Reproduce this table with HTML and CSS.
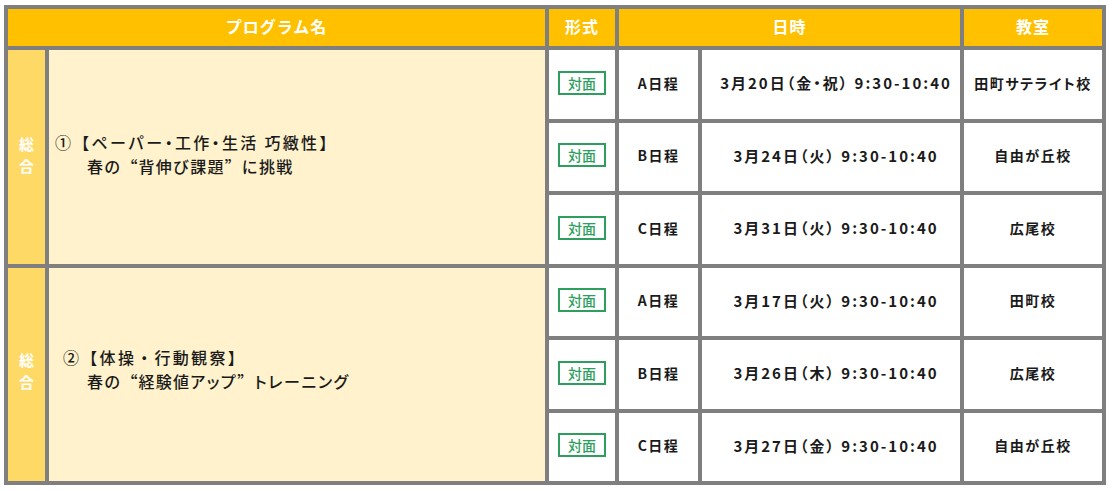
FILE: index.html
```html
<!DOCTYPE html>
<html lang="ja">
<head>
<meta charset="utf-8">
<link rel="stylesheet" href="styles.css">
</head>
<body>
<div class="table">
  <div class="th th-prog">プログラム名</div>
  <div class="th">形式</div>
  <div class="th th-date">日時</div>
  <div class="th">教室</div>

  <div class="cat cat-1">総<br>合</div>
  <div class="prog prog-1">
    <div class="title">①【ペーパー<span class="dot">・</span>工作<span class="dot">・</span>生活 巧緻性】</div>
    <div class="sub">春の<span class="q">“</span>背伸び課題<span class="q">”</span>に挑戦</div>
  </div>
  <div class="td"><span class="badge">対面</span></div>
  <div class="td">A日程</div>
  <div class="td date">3月20日（金・祝） 9:30-10:40</div>
  <div class="td">田町サテライト校</div>

  <div class="td"><span class="badge">対面</span></div>
  <div class="td">B日程</div>
  <div class="td date">3月24日（火） 9:30-10:40</div>
  <div class="td">自由が丘校</div>

  <div class="td"><span class="badge">対面</span></div>
  <div class="td">C日程</div>
  <div class="td date">3月31日（火） 9:30-10:40</div>
  <div class="td">広尾校</div>

  <div class="cat cat-2">総<br>合</div>
  <div class="prog prog-2">
    <div class="title">②【体操・行動観察】</div>
    <div class="sub">春の<span class="q">“</span>経験値<span class="kana">アップ</span><span class="q">”</span><span class="kana">トレーニング</span></div>
  </div>
  <div class="td"><span class="badge">対面</span></div>
  <div class="td">A日程</div>
  <div class="td date">3月17日（火） 9:30-10:40</div>
  <div class="td">田町校</div>

  <div class="td"><span class="badge">対面</span></div>
  <div class="td">B日程</div>
  <div class="td date">3月26日（木） 9:30-10:40</div>
  <div class="td">広尾校</div>

  <div class="td"><span class="badge">対面</span></div>
  <div class="td">C日程</div>
  <div class="td date">3月27日（金） 9:30-10:40</div>
  <div class="td">自由が丘校</div>
</div>
</body>
</html>
```

FILE: styles.css
```css
html, body {
  margin: 0;
  padding: 0;
  background: #ffffff;
}
body {
  padding: 5px 0 0 4px;
  font-family: "Noto Sans CJK JP", sans-serif;
}
.table {
  display: grid;
  width: 1094px;
  grid-template-columns: 37px 496px 66px 79px 258px 138px;
  grid-template-rows: 37px repeat(6, 68.5px);
  gap: 4px;
  padding: 4px;
  background: #7f7f7f;
}
.th {
  background: #ffc000;
  color: #ffffff;
  font-weight: 700;
  font-size: 16px;
  letter-spacing: 1px;
  padding-bottom: 3px;
  display: flex;
  align-items: center;
  justify-content: center;
}
.th-prog { grid-column: 1 / 3; }
.th-date { grid-column: 4 / 6; }
.cat {
  background: #ffd966;
  color: #ffffff;
  font-weight: 700;
  font-size: 15px;
  line-height: 22px;
  display: flex;
  align-items: center;
  justify-content: center;
  text-align: center;
}
.cat-1 { grid-row: 2 / 5; grid-column: 1; padding-bottom: 4px; }
.cat-2 { grid-row: 5 / 8; grid-column: 1; padding-bottom: 6px; }
.prog {
  background: #fff2cc;
  color: #1a1a1a;
  font-size: 16px;
  font-weight: 500;
  letter-spacing: 1.2px;
  line-height: 24px;
  padding-left: 6px;
  display: flex;
  flex-direction: column;
  justify-content: center;
}
.prog .title { letter-spacing: 2.3px; }
.prog-1 { grid-row: 2 / 5; grid-column: 2; padding-bottom: 5px; }
.prog-2 { grid-row: 5 / 8; grid-column: 2; padding-bottom: 10px; }
.prog-2 .title { padding-left: 8px; }
.prog .sub { padding-left: 32px; }
.dot { font-feature-settings: "palt"; }
.q { font-feature-settings: "fwid"; }
.kana { font-feature-settings: "palt"; letter-spacing: 1.6px; }
.td {
  background: #ffffff;
  color: #1a1a1a;
  font-weight: 700;
  font-size: 14px;
  letter-spacing: 1.5px;
  font-feature-settings: "palt";
  padding-bottom: 3px;
  display: flex;
  align-items: center;
  justify-content: center;
}
.date {
  font-size: 15px;
  letter-spacing: 2px;
  padding-left: 10px;
}
.badge {
  display: inline-flex;
  align-items: center;
  justify-content: center;
  width: 44px;
  height: 20px;
  border: 2px solid #2e9e5e;
  color: #2e9e5e;
  font-size: 14px;
  font-weight: 500;
  letter-spacing: 0;
  font-feature-settings: normal;
}
```
